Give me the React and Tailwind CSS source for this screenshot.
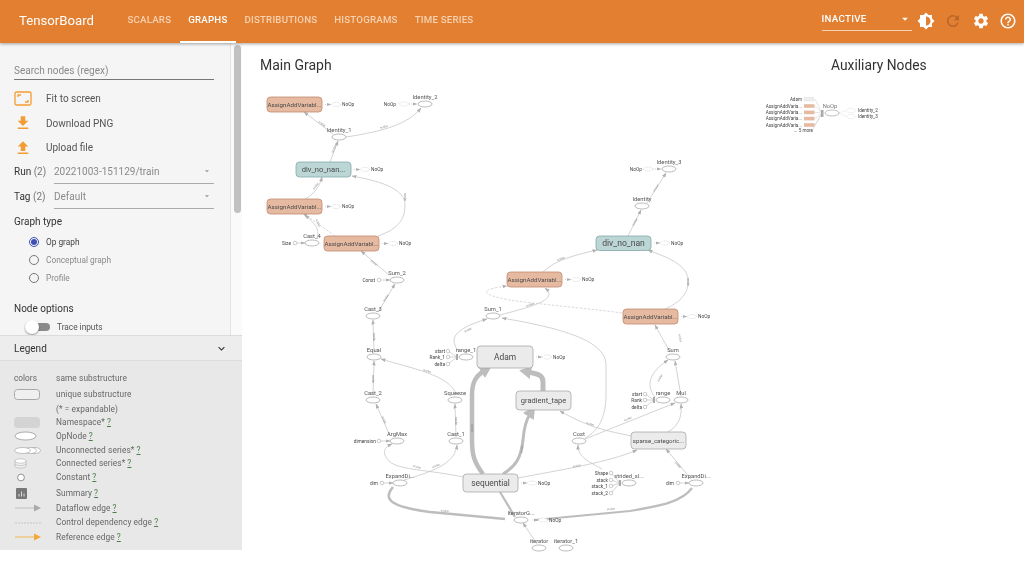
import React from "react";
import { MdBrightness6, MdRefresh, MdSettings, MdHelpOutline, MdFileDownload, MdFileUpload, MdArrowDropDown, MdExpandMore } from "react-icons/md";

const F = "Roboto, sans-serif";

const boxes = [
  ["AssignAddVariabl...", 267, 97, 55, 15, "#e6b9a1", "#c08a70", 6.2],
  ["div_no_nan...", 296, 162, 55, 15, "#bcd6d6", "#84a8a8", 7.6],
  ["AssignAddVariabl...", 267, 199, 55, 15, "#e6b9a1", "#c08a70", 6.2],
  ["AssignAddVariabl...", 324, 236, 55, 15, "#e6b9a1", "#c08a70", 6.2],
  ["div_no_nan", 596, 236, 55, 14.5, "#bcd6d6", "#84a8a8", 8.6],
  ["AssignAddVariabl...", 507, 272, 55, 15, "#e6b9a1", "#c08a70", 6.2],
  ["AssignAddVariabl...", 623, 309, 55, 15, "#e6b9a1", "#c08a70", 6.2],
  ["Adam", 477, 346, 56, 22, "#ebebeb", "#a8a8a8", 8.4],
  ["gradient_tape", 516, 391, 55, 19, "#ebebeb", "#a8a8a8", 7.5],
  ["sequential", 463, 474, 55, 18, "#ebebeb", "#a8a8a8", 8.4],
  ["sparse_categoric...", 631, 432, 55, 17, "#ebebeb", "#a8a8a8", 6.1],
];

const ops = [
  ["Identity_1", 339, 137], ["Identity_2", 425, 104], ["Cast_4", 312, 243], ["Sum_2", 397, 280],
  ["Cast_3", 373, 316], ["Equal", 374, 357], ["Cast_2", 373, 400], ["Squeeze", 455, 400],
  ["range_1", 466, 357], ["ArgMax", 397, 441], ["Cast_1", 456, 441], ["ExpandDi...", 400, 483],
  ["IteratorG...", 521, 520], ["iterator", 539, 548], ["iterator_1", 566, 548], ["Identity_3", 669, 169],
  ["Identity", 642, 206], ["Sum_1", 493, 316], ["Sum", 673, 357], ["range", 663, 400],
  ["Mul", 681, 400], ["Cost", 579, 441], ["strided_sl...", 629, 483], ["ExpandDi...", 696, 483],
];

const edges = [
  "M333,134 L304,112", "M346,137 C385,131 408,124 421,108", "M330,162 L338,141",
  "M305,199 C315,194 320,185 322,177", "M378,236 C395,230 405,222 405,205 C405,190 385,182 352,176",
  "M317,239 C319,230 318,226 305,215", "M389,275 L361,251", "M378,312 L395,284", "M374,353 L373,320",
  "M373,395 L374,361", "M456,394 C450,375 410,368 381,359", "M456,437 L455,404", "M390,436 L376,404",
  "M463,477 C430,470 400,470 390,462 C380,452 385,447 392,444", "M404,480 C430,472 455,465 457,445",
  "M459,352 C450,340 450,330 487,319", "M500,315 C530,307 560,300 545,288",
  "M585,438 C600,430 606,415 606,395 L606,365 C606,340 560,328 502,318",
  "M543,272 C555,260 575,255 597,250", "M665,309 C685,300 689,290 688,278 C685,262 660,255 648,250",
  "M628,236 L641,210", "M647,203 L666,173", "M670,352 L655,325", "M655,397 C645,385 650,372 668,360",
  "M681,396 L675,361", "M668,432 C680,425 682,415 681,404", "M585,439 L675,403",
  "M632,436 C600,430 585,425 560,411", "M518,478 C560,470 610,462 637,450", "M691,479 L666,449",
  "M602,469 C590,462 578,458 578,445", "M537,544 L523,523",
];

const dashedEdges = [
  "M335,236 L303,213",
  "M622,313 C570,306 520,303 500,298 C480,293 482,289 507,286",
];

const thick = [
  ["M483,474 C474,462 472,455 472,440 L472,395 C472,382 476,376 484,371", 4.5],
  ["M503,474 C516,466 521,458 523,440 C524,428 526,420 530,414", 3],
  ["M543,391 L543,382 C543,375 538,374 528,372", 5],
  ["M515,517 L500,492", 2.2],
  ["M393,487 C382,500 392,507 430,512 L505,519", 2.6],
  ["M692,488 C682,502 660,506 630,511 L535,520", 2.2],
];

const edgeLabels = [
  [322, 124, 35], [384, 127, -15], [334, 149, -65], [316, 186, -50], [405, 197, 90], [318, 223, 70],
  [374, 263, 40], [386, 298, -55], [374, 337, 90], [373, 379, 90], [427, 371, 18], [456, 421, 90],
  [384, 420, 65], [417, 467, 15], [436, 466, -20], [468, 330, -25], [530, 305, -18], [561, 259, -20],
  [688, 282, 90], [635, 222, -60], [656, 188, -58], [472, 428, 90], [522, 449, -80], [445, 511, 5],
  [611, 509, -6], [577, 466, -10], [680, 338, 80], [660, 378, -60], [628, 419, -22], [590, 424, 18], [678, 465, 50],
];

const noops = [
  [322, 104.5], [351, 169.5], [322, 206.5], [379, 243.5], [651, 243], [562, 279.5], [678, 316.5],
  [533, 357], [518, 483], [529, 520],
];

const inputs = [
  ["Size", 291, 295, 243, 305], ["Const", 375, 379, 280, 390], ["dimension", 376, 379, 441, 390],
  ["dim", 378, 382, 483, 393], ["dim", 674, 678, 483, 689],
];

const fans = [
  ["start", 445, 448, 351, 457, 357], ["Rank_1", 445, 448, 357, 457, 357], ["delta", 445, 448, 364, 457, 357],
  ["start", 642, 645, 394, 654, 400], ["Rank", 642, 645, 400, 654, 400], ["delta", 642, 645, 407, 654, 400],
  ["Shape", 608, 611, 473, 620, 483], ["stack", 608, 611, 480, 620, 483], ["stack_1", 608, 611, 486, 620, 483], ["stack_2", 608, 611, 493, 620, 483],
];

function Graph() {
  return (
    <svg width="782" height="518" viewBox="242 43 782 518" className="block" style={{ fontFamily: F }}>
      <defs>
        <marker id="a" markerUnits="userSpaceOnUse" markerWidth="6" markerHeight="5" refX="4.5" refY="2.5" orient="auto">
          <path d="M0,0.7 L5,2.5 L0,4.3 Z" fill="#b0b0b0" />
        </marker>
        <marker id="t1" markerUnits="userSpaceOnUse" markerWidth="14" markerHeight="14" refX="3" refY="7" orient="auto">
          <path d="M0,0.5 L12,7 L0,13.5 Z" fill="#bdbdbd" />
        </marker>
      </defs>
      {edges.map((d, i) => <path key={i} d={d} fill="none" stroke="#c0c0c0" strokeWidth="0.7" markerEnd="url(#a)" />)}
      {dashedEdges.map((d, i) => <path key={i} d={d} fill="none" stroke="#c0c0c0" strokeWidth="0.6" strokeDasharray="2.5 1.5" markerEnd="url(#a)" />)}
      {thick.map(([d, w], i) => <path key={i} d={d} fill="none" stroke="#bdbdbd" strokeWidth={w} markerEnd={i < 3 ? "url(#t1)" : undefined} />)}
      {edgeLabels.map(([x, y, r], i) => (
        <text key={i} x={x} y={y} transform={`rotate(${r} ${x} ${y})`} textAnchor="middle" dominantBaseline="middle" fontSize="3" fill="#888">scalar</text>
      ))}
      {boxes.map(([t, x, y, w, h, fill, stroke, fs], i) => (
        <g key={i}>
          <rect x={x} y={y} width={w} height={h} rx="3.5" fill={fill} stroke={stroke} strokeWidth="0.8" />
          <text x={x + w / 2} y={y + h / 2 + fs * 0.35} textAnchor="middle" fontSize={fs} fill="#4a4a4a">{t}</text>
        </g>
      ))}
      {ops.map(([t, x, y], i) => (
        <g key={i}>
          <ellipse cx={x} cy={y} rx="7" ry="3" fill="#fff" stroke="#a0a0a0" strokeWidth="0.7" />
          <text x={x} y={y - 5} textAnchor="middle" fontSize="5.8" fill="#555">{t}</text>
        </g>
      ))}
      {noops.map(([x, y], i) => (
        <g key={i}>
          <path d={`M${x + 3},${y} L${x + 9},${y}`} stroke="#aaa" strokeWidth="0.5" strokeDasharray="1 1" markerEnd="url(#a)" />
          <ellipse cx={x + 14} cy={y} rx="4.5" ry="2" fill="#fff" stroke="#bbb" strokeWidth="0.5" strokeDasharray="1 0.8" />
          <text x={x + 20} y={y + 1.7} fontSize="4.8" fill="#444">NoOp</text>
        </g>
      ))}
      {[["NoOp", 396, 404, 104, 417], ["NoOp", 642, 648, 169, 661]].map(([t, tx, cx, y, ax], i) => (
        <g key={i}>
          <text x={tx} y={y + 1.7} textAnchor="end" fontSize="4.8" fill="#444">{t}</text>
          <ellipse cx={cx} cy={y} rx="4.5" ry="2" fill="#fff" stroke="#bbb" strokeWidth="0.5" strokeDasharray="1 0.8" />
          <path d={`M${cx + 5},${y} L${ax},${y}`} stroke="#aaa" strokeWidth="0.5" strokeDasharray="1 1" markerEnd="url(#a)" />
        </g>
      ))}
      {inputs.map(([t, tx, cx, y, ax], i) => (
        <g key={i}>
          <text x={tx} y={y + 1.7} textAnchor="end" fontSize="4.8" fill="#444">{t}</text>
          <circle cx={cx} cy={y} r="1.8" fill="#fff" stroke="#999" strokeWidth="0.5" />
          <path d={`M${cx + 2},${y} L${ax},${y}`} stroke="#aaa" strokeWidth="0.5" markerEnd="url(#a)" />
        </g>
      ))}
      {fans.map(([t, tx, cx, y, ax, ay], i) => (
        <g key={i}>
          <path d={`M${cx},${y} L${ax},${ay}`} stroke="#aaa" strokeWidth="0.5" />
          <text x={tx} y={y + 1.7} textAnchor="end" fontSize="4.8" fill="#444">{t}</text>
          <circle cx={cx} cy={y} r="1.8" fill="#fff" stroke="#999" strokeWidth="0.5" />
        </g>
      ))}
      <rect x="456" y="354" width="2" height="6" fill="#aaa" />
      <rect x="653" y="397" width="2" height="6" fill="#aaa" />
      <rect x="619" y="480" width="2" height="6" fill="#aaa" />

      <text x="802" y="101" textAnchor="end" fontSize="4.6" fill="#444">Adam</text>
      <rect x="804" y="97.5" width="10" height="3.5" fill="#eee" stroke="#ccc" strokeWidth="0.4" strokeDasharray="1 0.6" />
      {[106, 112.4, 118.6, 125].map((y, i) => (
        <g key={i}>
          <text x="802" y={y + 1.7} textAnchor="end" fontSize="4.6" fill="#444">AssignAddVaria...</text>
          <rect x="804" y={y - 1.8} width="10.5" height="3.6" fill="#e6b9a1" />
          <path d={`M815,${y} L822,113`} stroke="#bbb" strokeWidth="0.4" />
        </g>
      ))}
      <path d="M815,99 L822,113 M813,129 L822,113" stroke="#bbb" strokeWidth="0.4" />
      <text x="813" y="131.5" textAnchor="end" fontSize="4.6" fill="#444">... 5 more</text>
      <rect x="821" y="110" width="2.5" height="7" fill="#aaa" />
      <text x="830" y="108" textAnchor="middle" fontSize="5.8" fill="#777">NoOp</text>
      <ellipse cx="832" cy="113" rx="7" ry="3" fill="#fff" stroke="#999" strokeWidth="0.6" />
      {[[851, 110.5, "Identity_2"], [851, 116.5, "Identity_3"]].map(([x, y, t], i) => (
        <g key={i}>
          <path d={`M839,113 L846,${y}`} stroke="#bbb" strokeWidth="0.4" strokeDasharray="1 0.8" />
          <ellipse cx={x} cy={y} rx="4.5" ry="2.2" fill="#fff" stroke="#bbb" strokeWidth="0.4" strokeDasharray="1 0.8" />
          <text x="858" y={y + 1.6} fontSize="4.6" fill="#444">{t}</text>
        </g>
      ))}
    </svg>
  );
}

function NavTab({ label, active }) {
  return (
    <div className={`h-full flex items-center px-[8.5px] text-[9.7px] font-medium tracking-[0.2px] border-b-2 ${active ? "text-white border-white" : "text-[#f6d2b3] border-transparent"}`}>
      {label}
    </div>
  );
}

function ToolRow({ icon, label }) {
  return (
    <div className="h-[24.7px] flex items-center">
      <div className="w-[32px] flex items-center">{icon}</div>
      <span className="text-[10px] text-[#555]">{label}</span>
    </div>
  );
}

function SelectRow({ label, count, value }) {
  return (
    <div className="h-[25px] flex items-center text-[10px]">
      <span className="text-[#333] w-[40px] shrink-0">{label} <span className="text-[#777]">{count}</span></span>
      <div className="flex-1 h-full flex items-center justify-between border-b border-[#aaa] pr-[2px]">
        <span className="text-[#8a8a8a]">{value}</span>
        <MdArrowDropDown size={10} color="#999" />
      </div>
    </div>
  );
}

function Radio({ label, on }) {
  return (
    <div className="h-[18px] flex items-center pl-[14.5px]">
      <span className={`w-[10.5px] h-[10.5px] rounded-full border flex items-center justify-center ${on ? "border-[#3f51b5]" : "border-[#777]"}`}>
        {on && <span className="w-[5.5px] h-[5.5px] rounded-full bg-[#3f51b5]" />}
      </span>
      <span className={`ml-[7px] text-[8.3px] ${on ? "text-[#444]" : "text-[#8a8a8a]"}`}>{label}</span>
    </div>
  );
}

function Q() {
  return <span className="text-[#4a7d4a] underline ml-[2px]">?</span>;
}

function LegendRow({ h, icon, children }) {
  return (
    <div className="flex items-center" style={{ height: h }}>
      <div className="w-[42px] shrink-0 flex items-center text-[8.3px] text-[#666]">{icon}</div>
      <span className="text-[8.3px] text-[#666] tracking-[0.1px]">{children}</span>
    </div>
  );
}

const Ico = ({ w, h, children }) => <svg width={w} height={h} viewBox={`0 0 ${w} ${h}`} className="block">{children}</svg>;

export default function App() {
  return (
    <div className="w-[1024px] h-[561px] bg-white overflow-hidden flex flex-col blur-[0.4px]" style={{ fontFamily: F }}>
      <header className="h-[43px] shrink-0 bg-[#e37f30] flex items-center shadow-[0_1px_3px_rgba(0,0,0,0.35)] relative z-10">
        <div className="pl-[19px] w-[119px] text-white text-[13.2px] mt-[-2px]">TensorBoard</div>
        <nav className="h-full flex items-center">
          <NavTab label="SCALARS" />
          <NavTab label="GRAPHS" active />
          <NavTab label="DISTRIBUTIONS" />
          <NavTab label="HISTOGRAMS" />
          <NavTab label="TIME SERIES" />
        </nav>
        <div className="ml-auto flex items-center">
          <div className="w-[90px] h-[22px] border-b border-[#f6d2b3] flex items-center justify-between text-white text-[9.7px] font-medium tracking-[0.3px] mt-[-4px]">
            <span>INACTIVE</span>
            <MdArrowDropDown size={14} />
          </div>
          <div className="flex items-center gap-[9.5px] pl-[5px] pr-[7px] mt-[-1px]">
            <MdBrightness6 size={18} color="#fff" />
            <MdRefresh size={18} color="#b8662a" />
            <MdSettings size={18} color="#fff" />
            <MdHelpOutline size={18} color="#fff" />
          </div>
        </div>
      </header>
      <div className="flex-1 flex min-h-0">
        <aside className="w-[242px] shrink-0 h-[507px] flex flex-col">
          <div className="h-[292px] flex overflow-hidden bg-[#f5f5f5]">
            <div className="flex-1 pl-[14px] pr-[16px] pt-[19px]">
              <div className="h-[18px] border-b border-[#777] flex items-center text-[10px] text-[#8a8a8a]">Search nodes (regex)</div>
              <div className="mt-[6px]">
                <ToolRow label="Fit to screen" icon={
                  <svg width="18" height="15" viewBox="0 0 18 15" fill="none" stroke="#f39c32" strokeWidth="1.3">
                    <rect x="1" y="1" width="16" height="13" rx="1.5" />
                    <path d="M4 6V4h3M14 9v2h-3" />
                  </svg>} />
                <ToolRow label="Download PNG" icon={<MdFileDownload size={18} color="#f39c32" />} />
                <ToolRow label="Upload file" icon={<MdFileUpload size={18} color="#f39c32" />} />
              </div>
              <div className="mt-[-1px]">
                <SelectRow label="Run" count="(2)" value="20221003-151129/train" />
                <SelectRow label="Tag" count="(2)" value="Default" />
              </div>
              <div className="mt-[5px] text-[10px] text-[#333] h-[15px] flex items-center">Graph type</div>
              <div className="mt-[4px]">
                <Radio label="Op graph" on />
                <Radio label="Conceptual graph" />
                <Radio label="Profile" />
              </div>
              <div className="mt-[14px] text-[10px] text-[#333] h-[15px] flex items-center">Node options</div>
              <div className="mt-[4px] h-[14px] flex items-center pl-[11px]">
                <div className="relative w-[25px] h-[12px] flex items-center">
                  <div className="ml-[4px] w-[21px] h-[8px] rounded-full bg-[#8a8a8a]" />
                  <div className="absolute left-0 top-[-1px] w-[14px] h-[14px] rounded-full bg-white shadow-[0_1px_2px_rgba(0,0,0,0.4)]" />
                </div>
                <span className="ml-[7px] text-[8.3px] text-[#555]">Trace inputs</span>
              </div>
            </div>
            <div className="w-[12px] shrink-0 bg-[#fafafa] border-l border-[#e4e4e4] pt-[2px] pl-[3px]">
              <div className="w-[7px] h-[168px] rounded-full bg-[#c1c1c1]" />
            </div>
          </div>
          <div className="h-[26px] shrink-0 bg-[#ededed] border-t border-b border-[#dcdcdc] flex items-center justify-between pl-[14px] pr-[14px] text-[10px] text-[#333] pt-[1px]">
            <span>Legend</span>
            <MdExpandMore size={13} color="#333" />
          </div>
          <div className="flex-1 bg-[#e8e8e8] pl-[14px] pt-[9px]">
            <LegendRow h={16} icon="colors">same substructure</LegendRow>
            <LegendRow h={17} icon={<div className="w-[26px] h-[11px] rounded-[3.5px] bg-[#f0f0f0] border border-[#a8a8a8]" />}>unique substructure</LegendRow>
            <LegendRow h={12}>(* = expandable)</LegendRow>
            <LegendRow h={14} icon={<div className="w-[26px] h-[11px] rounded-[3.5px] bg-[#d4d4d4]" />}>Namespace*<Q /></LegendRow>
            <LegendRow h={14} icon={<Ico w={24} h={10}><ellipse cx="11.5" cy="5" rx="10.5" ry="4" fill="#fff" stroke="#999" strokeWidth="0.8" /></Ico>}>OpNode<Q /></LegendRow>
            <LegendRow h={14} icon={<Ico w={28} h={9}>
              <ellipse cx="21" cy="4.5" rx="5.5" ry="3" fill="#fff" stroke="#999" strokeWidth="0.6" />
              <ellipse cx="16.5" cy="4.5" rx="6" ry="3" fill="#fff" stroke="#999" strokeWidth="0.6" />
              <ellipse cx="8.5" cy="4.5" rx="8" ry="3" fill="#fff" stroke="#999" strokeWidth="0.6" /></Ico>}>Unconnected series*<Q /></LegendRow>
            <LegendRow h={13} icon={<Ico w={13} h={11}>
              <path d="M1,3 V8.5 C1,10.5 12,10.5 12,8.5 V3" fill="#f2f2f2" stroke="#aaa" strokeWidth="0.6" />
              <path d="M1,6 C1,8 12,8 12,6" fill="none" stroke="#aaa" strokeWidth="0.6" />
              <ellipse cx="6.5" cy="3" rx="5.5" ry="2.2" fill="#fff" stroke="#aaa" strokeWidth="0.6" /></Ico>}>Connected series*<Q /></LegendRow>
            <LegendRow h={15} icon={<Ico w={14} h={9}><circle cx="7" cy="4.5" r="3.4" fill="#fff" stroke="#777" strokeWidth="0.8" /></Ico>}>Constant<Q /></LegendRow>
            <LegendRow h={16} icon={<Ico w={13} h={11}>
              <rect x="2" y="0" width="11" height="11" rx="1" fill="#777" />
              <path d="M5,8.5V6M7.5,8.5V3.5M10,8.5V5.5" stroke="#ddd" strokeWidth="1" /></Ico>}>Summary<Q /></LegendRow>
            <LegendRow h={14} icon={<Ico w={28} h={8}><path d="M1,4H21" stroke="#bbb" strokeWidth="0.9" /><path d="M20,0.5L27,4L20,7.5Z" fill="#aaa" /></Ico>}>Dataflow edge<Q /></LegendRow>
            <LegendRow h={15} icon={<Ico w={28} h={4}><path d="M1,2H27" stroke="#bbb" strokeWidth="0.8" strokeDasharray="2 1" /></Ico>}>Control dependency edge<Q /></LegendRow>
            <LegendRow h={14} icon={<Ico w={28} h={8}><path d="M1,4H21" stroke="#f5b044" strokeWidth="0.9" /><path d="M20,0.5L27,4L20,7.5Z" fill="#f5a93a" /></Ico>}>Reference edge<Q /></LegendRow>
          </div>
        </aside>
        <main className="flex-1 relative min-w-0">
          <Graph />
          <h2 className="absolute left-[18px] top-[12px] text-[14px] text-[#333]">Main Graph</h2>
          <h2 className="absolute left-[589px] top-[12px] text-[13.8px] text-[#333]">Auxiliary Nodes</h2>
        </main>
      </div>
    </div>
  );
}
